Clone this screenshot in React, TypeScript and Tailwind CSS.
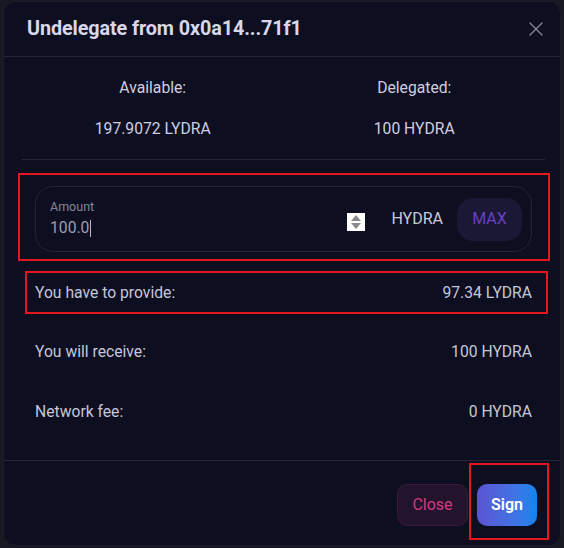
import { X } from "lucide-react";

const rows = [
  { label: "You have to provide:", value: "97.34 LYDRA" },
  { label: "You will receive:", value: "100 HYDRA" },
  { label: "Network fee:", value: "0 HYDRA" },
];

function Spinner() {
  return (
    <div className="w-[18px] h-[18px] bg-white flex flex-col items-center justify-center gap-[2px]">
      <svg width="10" height="6" viewBox="0 0 10 6">
        <path d="M5 0 L10 6 L0 6 Z" fill="#8a8a8a" />
      </svg>
      <svg width="10" height="6" viewBox="0 0 10 6">
        <path d="M0 0 L10 0 L5 6 Z" fill="#8a8a8a" />
      </svg>
    </div>
  );
}

export default function App() {
  return (
    <div className="relative w-[564px] h-[548px] overflow-hidden bg-[#181922] pl-[3px] pt-[1px] font-['Roboto',sans-serif]">
      <div className="w-[558px] h-[545px] rounded-xl bg-[#0d0e20] border border-[#1c1d2c] flex flex-col">
        {/* header */}
        <div className="h-[55px] shrink-0 flex items-center justify-between pl-[23px] pr-[12px] border-b border-[#26273a]">
          <h2 className="text-[19.8px] font-bold text-[#d8d8ea] tracking-[-0.1px]">Undelegate from 0x0a14...71f1</h2>
          <X size={24} strokeWidth={1.2} className="text-[#8b8b9c]" />
        </div>

        {/* balances */}
        <div className="ml-[18px] mr-[15px] grid grid-cols-2 pt-[21px] pb-[20px] border-b border-[#26273a] text-[15.7px] text-[#cfcfe0] leading-[20px]">
          <div className="flex flex-col items-center gap-[21px]">
            <span>Available:</span>
            <span>197.9072 LYDRA</span>
          </div>
          <div className="flex flex-col items-center gap-[21px]">
            <span>Delegated:</span>
            <span>100 HYDRA</span>
          </div>
        </div>

        {/* amount input */}
        <div className="ml-[31px] mr-[28px] mt-[26px] h-[66px] rounded-[18px] border border-[#222338] flex items-center pl-[14px] pr-[9px]">
          <div className="flex-1 flex flex-col">
            <span className="text-[12.5px] text-[#85859a] leading-[16px]">Amount</span>
            <span className="text-[15.7px] text-[#9d9db0] leading-[22px] flex items-center mt-[2px]">
              100.0
              <span className="w-px h-[17px] bg-[#b9b9c8] ml-px" />
            </span>
          </div>
          <div className="mt-[6px] mr-[26px]">
            <Spinner />
          </div>
          <span className="text-[16px] text-[#c9c9dc] mr-[14px]">HYDRA</span>
          <div className="w-[65px] h-[43px] rounded-[16px] bg-[#1b1836] flex items-center justify-center text-[16px] text-[#6a3fc6]">
            MAX
          </div>
        </div>

        {/* summary rows */}
        <div className="ml-[31px] mr-[28px] mt-[11px] flex flex-col">
          {rows.map((r) => (
            <div key={r.label} className="h-[59.5px] flex items-center justify-between text-[15.7px] text-[#c6c6da]">
              <span>{r.label}</span>
              <span>{r.value}</span>
            </div>
          ))}
        </div>

        {/* footer */}
        <div className="mt-auto border-t border-[#26273a] flex justify-end gap-[9px] pt-[23px] pb-[19px] pr-[23px]">
          <button className="w-[71px] h-[42px] rounded-[10px] bg-[#23132c] border border-[#3a1a3c] text-[16px] text-[#d5397f]">
            Close
          </button>
          <button className="w-[60px] h-[42px] rounded-[10px] bg-gradient-to-r from-[#5a53d1] to-[#0a86ef] text-[16px] font-semibold text-white">
            Sign
          </button>
        </div>
      </div>

      {/* annotation boxes */}
      <div className="absolute left-[18px] top-[173px] w-[532px] h-[88px] border-2 border-[#e4161f]" />
      <div className="absolute left-[25px] top-[271px] w-[523px] h-[43px] border-2 border-[#e4161f]" />
      <div className="absolute left-[469px] top-[463px] w-[80px] h-[77px] border-2 border-[#e4161f]" />
    </div>
  );
}
